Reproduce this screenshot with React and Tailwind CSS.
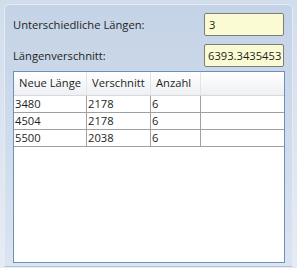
export default function App() {
  const rows = [
    ["3480", "2178", "6"],
    ["4504", "2178", "6"],
    ["5500", "2038", "6"],
  ];
  const font = { fontFamily: '"Open Sans", "Noto Sans", sans-serif' };
  return (
    <div
      className="w-[297px] h-[268px] pt-[4px] pl-[4px] pr-[4px] bg-gradient-to-b from-[#d2ddec] to-[#e6ecf5] text-[11.2px] text-[#1e1e1e] whitespace-nowrap"
      style={font}
    >
      <div className="h-[263px] rounded-t-[5px] border border-[#e4ebf5] border-b-[#b9c3d0] bg-gradient-to-b from-[#c4d3e6] to-[#dbe4f0] pt-[8px] pl-[8px] pr-[8px] flex flex-col">
        <div className="flex items-center justify-between h-[23px]">
          <span className="leading-none">Unterschiedliche Längen:</span>
          <div className="w-[80px] h-[23px] rounded-[2px] border border-[#7d7d7d] bg-[#fbfbd3] flex items-center px-[4px] leading-none">3</div>
        </div>
        <div className="flex items-center justify-between h-[23px] mt-[8px]">
          <span className="leading-none">Längenverschnitt:</span>
          <div className="w-[80px] h-[23px] rounded-[2px] border border-[#7d7d7d] bg-[#fbfbd3] flex items-center pl-[3px] leading-none overflow-hidden">6393.3435453</div>
        </div>
        <div className="mt-[4px] w-[272px] h-[192px] border border-[#6b8fbe] bg-white flex flex-col">
          <div className="flex h-[24px] bg-gradient-to-b from-white to-[#eef0f3] border-b border-[#d5d8dd]">
            <div className="w-[73px] border-r border-[#e2e4e8] flex items-center pl-[5px]">Neue Länge</div>
            <div className="w-[64px] border-r border-[#e2e4e8] flex items-center pl-[5px]">Verschnitt</div>
            <div className="w-[50px] border-r border-[#e2e4e8] flex items-center pl-[5px]">Anzahl</div>
            <div className="flex-1" />
          </div>
          {rows.map((r, i) => (
            <div key={i} className="flex h-[17px] border-b border-[#a0a0a0]">
              <div className="w-[73px] border-r border-[#a0a0a0] flex items-center pl-[1px]">{r[0]}</div>
              <div className="w-[64px] border-r border-[#a0a0a0] flex items-center pl-[1px]">{r[1]}</div>
              <div className="w-[50px] border-r border-[#a0a0a0] flex items-center pl-[1px]">{r[2]}</div>
              <div className="flex-1" />
            </div>
          ))}
        </div>
      </div>
    </div>
  );
}
